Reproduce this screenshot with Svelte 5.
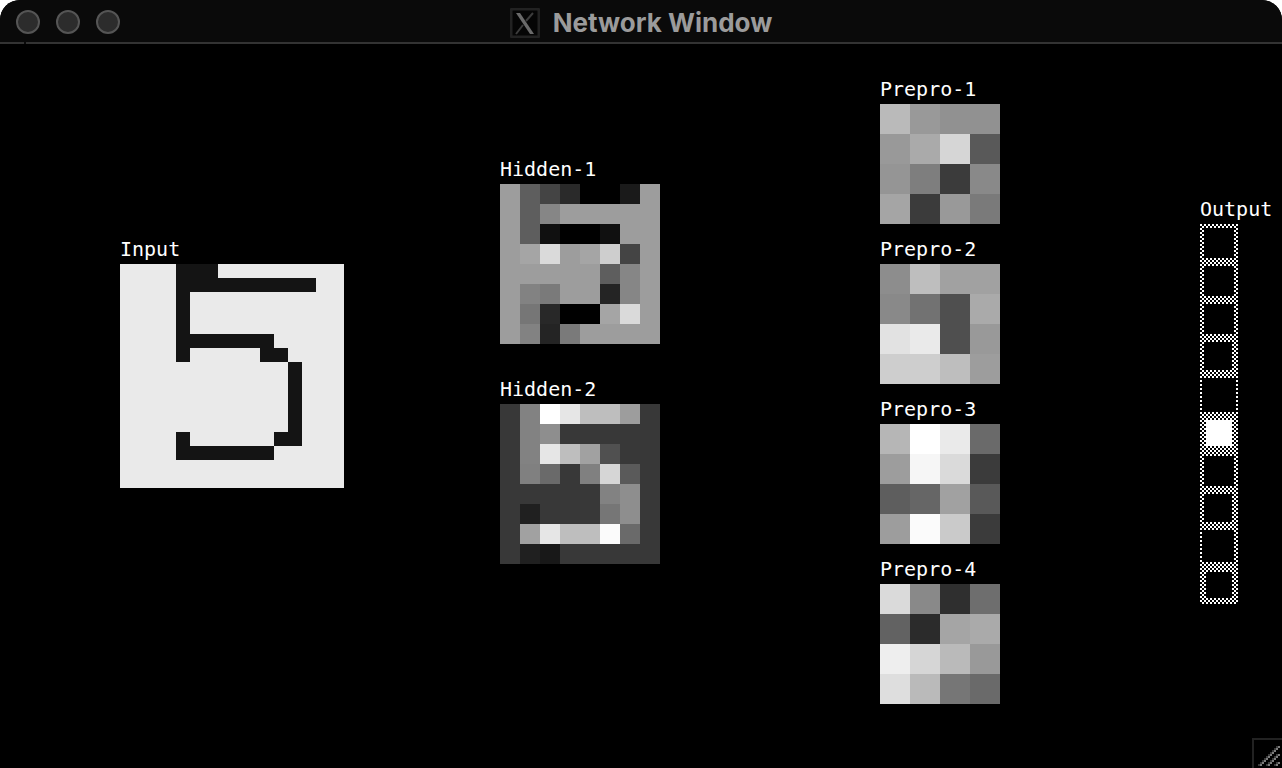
<script>
  const hex = (rows) => rows.map((row) => row.split(' '));
  const digit = [
    '....###.........',
    '....##########..',
    '....#...........',
    '....#...........',
    '....#...........',
    '....#######.....',
    '....#.....##....',
    '............#...',
    '............#...',
    '............#...',
    '............#...',
    '............#...',
    '....#......##...',
    '....#######.....',
    '................',
    '................'
  ].map((row) => [...row].map((c) => (c === '#' ? '14' : 'ea')));

  const columns = [
    { id: 'input', cell: 14, layers: [{ name: 'Input', rows: digit }] },
    {
      id: 'hidden',
      cell: 20,
      layers: [
        {
          name: 'Hidden-1',
          rows: hex([
            '9d 5e 44 2a 00 00 1a 9d',
            '9d 5e 86 9d 9d 9d 9d 9d',
            '9d 5e 10 00 00 10 9d 9d',
            '9d a5 da 9d a5 ce 44 9d',
            '9d 9d 9d 9d 9d 5e 86 9d',
            '9d 82 7a 9d 9d 24 86 9d',
            '9d 76 28 00 00 a5 da 9d',
            '9d 82 24 7a 9d 9d 9d 9d'
          ])
        },
        {
          name: 'Hidden-2',
          rows: hex([
            '38 82 ff e6 be be 9d 38',
            '38 82 8e 38 38 38 38 38',
            '38 82 e6 be a1 50 38 38',
            '38 80 6a 38 80 d6 5a 38',
            '38 38 38 38 38 82 8e 38',
            '38 20 38 38 38 76 8e 38',
            '38 a1 e6 be be fb 6a 38',
            '38 20 18 38 38 38 38 38'
          ])
        }
      ]
    },
    {
      id: 'prepro',
      cell: 30,
      layers: [
        { name: 'Prepro-1', rows: hex(['ba 99 91 91', '99 aa d6 59', '95 7e 3b 89', 'a5 3b 99 7a']) },
        { name: 'Prepro-2', rows: hex(['8d be a1 a1', '89 72 4f aa', 'e2 ea 4f 99', 'ce ce be 9d']) },
        { name: 'Prepro-3', rows: hex(['b6 ff ea 6a', '9d f6 da 3b', '5e 66 a1 59', '9d fb ca 3b']) },
        { name: 'Prepro-4', rows: hex(['da 89 2f 6e', '62 2b a5 aa', 'ee d6 ba 99', 'de ba 76 6a']) }
      ]
    }
  ];

  const outputs = [
    [4, 30, 30], [4, 30, 30], [4, 30, 30], [4, 28, 28], [2, 34, 34],
    [6, 26, 26], [4, 30, 30], [4, 28, 28], [2, 32, 32], [6, 26, 26]
  ].map(([inset, w, h], i) => ({ inset, w, h, y: i * 38, on: i === 5 }));
</script>

<div class="window">
  <header>
    <div class="controls">
      <button aria-label="Close"></button>
      <button aria-label="Minimize"></button>
      <button aria-label="Zoom"></button>
    </div>
    <div class="title">
      <svg width="30" height="30" viewBox="0 0 30 30" aria-hidden="true">
        <rect x="1" y="1" width="28" height="28" rx="2" fill="#050505" stroke="#222" stroke-width="3" />
        <path d="M23 5 16 13M13 17 6 26" stroke="#3c3c3c" stroke-width="2" />
        <path d="M6 5h4l14 21h-4z" fill="#6a6a6a" />
      </svg>
      <h1>Network Window</h1>
    </div>
  </header>
  <div class="rule"></div>

  <main>
    {#each columns as column}
      <section class={column.id}>
        {#each column.layers as layer}
          {@const size = layer.rows.length * column.cell}
          <figure>
            <figcaption>{layer.name}</figcaption>
            <svg width={size} height={size} shape-rendering="crispEdges" aria-hidden="true">
              {#each layer.rows as row, y}
                {#each row as v, x}
                  <rect
                    x={x * column.cell}
                    y={y * column.cell}
                    width={column.cell}
                    height={column.cell}
                    fill={`#${v}${v}${v}`}
                  />
                {/each}
              {/each}
            </svg>
          </figure>
        {/each}
      </section>
    {/each}
    <section class="output">
      <figure>
        <figcaption>Output</figcaption>
        <svg width="38" height="380" shape-rendering="crispEdges" aria-hidden="true">
          <defs>
            <pattern id="stipple" width="4" height="4" patternUnits="userSpaceOnUse">
              <path d="M0 0h2v2h-2zM2 2h2v2h-2z" fill="#fff" />
            </pattern>
          </defs>
          <rect width="38" height="380" fill="url(#stipple)" />
          {#each outputs as o}
            <rect x={o.inset} y={o.y + o.inset} width={o.w} height={o.h} fill={o.on ? '#fff' : '#000'} />
          {/each}
        </svg>
      </figure>
    </section>
  </main>

  <svg class="grip" width="30" height="30" shape-rendering="crispEdges" aria-hidden="true">
    <path d="M0 0h30v2h-28v28h-2z" fill="#222" />
    {#each [8, 16, 24] as start}
      {#each Array.from({ length: (28 - start) / 2 }, (_, i) => i * 2) as d}
        <rect x={start + d - 2} y={26 - d} width="2" height="2" fill="#3a3a3a" />
        <rect x={start + d} y={26 - d} width="2" height="2" fill="#7c7c7c" />
      {/each}
    {/each}
  </svg>
</div>

<style>
  :global(body) {
    margin: 0;
    background: #fff;
  }
  .window {
    position: relative;
    min-height: 100vh;
    background: #000;
    border-radius: 20px 20px 0 0;
    overflow: hidden;
  }
  header {
    display: grid;
    grid-template-columns: 1fr auto 1fr;
    align-items: center;
    box-sizing: border-box;
    height: 42px;
    padding: 2px 16px 0;
    background: #0a0a0a;
  }
  .controls {
    display: flex;
    gap: 16px;
  }
  .controls button {
    box-sizing: border-box;
    width: 24px;
    height: 24px;
    padding: 0;
    border: 2px solid #555;
    border-radius: 50%;
    background: #2c2c2c;
  }
  .title {
    display: flex;
    align-items: center;
    gap: 13px;
    padding-top: 2px;
  }
  h1 {
    margin: 0;
    font: 700 26px/30px Inter, sans-serif;
    color: #9b9b9b;
  }
  .rule {
    height: 2px;
    background: linear-gradient(to right, #333 24px, #0a0a0a 24px 26px, #333 26px);
  }
  main {
    display: grid;
    grid-template-columns: 380fr 380fr 320fr 82fr;
    padding: 34px 0 60px 120px;
  }
  section {
    display: flex;
    flex-direction: column;
    gap: 14px;
    min-width: 0;
  }
  .input {
    padding-top: 160px;
  }
  .hidden {
    padding-top: 80px;
    gap: 34px;
  }
  .output {
    padding-top: 120px;
  }
  figure {
    margin: 0;
  }
  figure svg {
    display: block;
  }
  figcaption {
    padding-bottom: 4px;
    font: 20px/22px 'DejaVu Sans Mono', monospace;
    color: #fff;
    white-space: nowrap;
  }
  .grip {
    position: absolute;
    right: 0;
    bottom: 0;
  }
</style>
